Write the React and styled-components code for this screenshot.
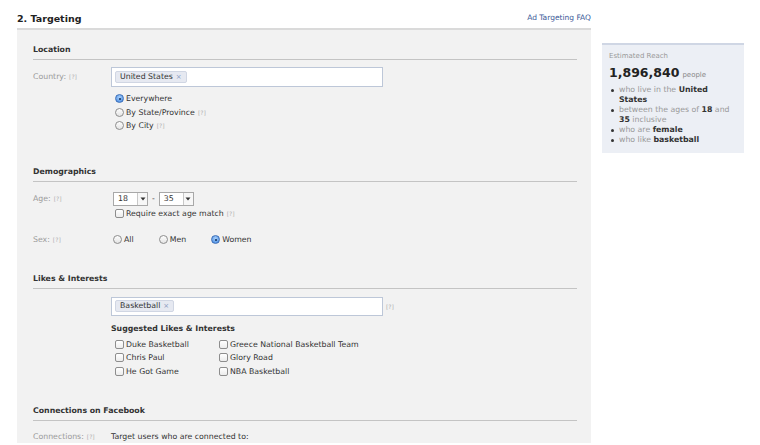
import React from "react";
import styled, { createGlobalStyle, css } from "styled-components";

const GlobalStyle = createGlobalStyle`
  html, body { margin: 0; padding: 0; background: #fff; }
  body { font-family: "DejaVu Sans", "Liberation Sans", sans-serif; font-size: 7.8px; color: #333; }
  * { box-sizing: border-box; }
`;

const Page = styled.div`
  display: flex;
  align-items: flex-start;
  width: 760px;
  height: 445px;
  padding-left: 17px;
  overflow: hidden;
`;

const Main = styled.div`
  width: 574px;
  height: 443px;
  display: flex;
  flex-direction: column;
`;

const Header = styled.div`
  height: 30px;
  flex: none;
  border-bottom: 2px solid #dadada;
  display: flex;
  justify-content: space-between;
  align-items: flex-end;
  padding-bottom: 3px;
`;

const Title = styled.h2`
  margin: 0;
  font-size: 9.5px;
  line-height: 12px;
  font-weight: bold;
  color: #222;
`;

const FaqLink = styled.a`
  font-size: 7.5px;
  line-height: 12px;
  color: #3b5998;
  text-decoration: none;
  margin-bottom: 1px;
`;

const Panel = styled.div`
  flex: 1;
  background: #f2f2f2;
  padding: 14px 14px 0 16px;
  overflow: hidden;
`;

const Section = styled.section`
  margin-top: ${(p) => p.$top || 0}px;
`;

const SectionTitle = styled.div`
  font-weight: bold;
  font-size: 7.8px;
  line-height: 12px;
  color: #333;
  padding-bottom: 3px;
  border-bottom: 1px solid #c4c4c4;
`;

const Row = styled.div`
  display: grid;
  grid-template-columns: 78px 1fr;
  align-items: ${(p) => p.$align || "center"};
  margin-top: ${(p) => p.$top || 0}px;
`;

const Label = styled.div`
  color: #9a9a9a;
  line-height: 12px;
`;

const Help = styled.span`
  color: #b0b0b0;
  font-size: 6px;
  margin-left: 3px;
`;

const Controls = styled.div`
  display: flex;
  flex-direction: column;
  align-items: flex-start;
`;

const InputLine = styled.div`
  display: flex;
  align-items: center;
`;

const TokenInput = styled.div`
  width: 272px;
  height: ${(p) => p.$h || 20}px;
  border: 1px solid #bdc7d8;
  background: #fff;
  display: flex;
  align-items: center;
  padding: 0 3px;
`;

const Token = styled.span`
  display: inline-flex;
  align-items: center;
  height: 12px;
  padding: 0 4px;
  background: #e6e9f1;
  border: 1px solid #d0d6e3;
  border-radius: 2px;
  color: #333;
  line-height: 10px;
`;

const TokenX = styled.span`
  color: #8a9bc0;
  margin-left: 3px;
  font-size: 7px;
`;

const OptionList = styled.div`
  display: flex;
  flex-direction: column;
  padding-left: 4px;
  margin-top: ${(p) => p.$top || 0}px;
`;

const OptionRow = styled.label`
  display: flex;
  align-items: center;
  height: 13.5px;
  gap: 2px;
  color: #333;
  white-space: nowrap;
`;

const Radio = styled.span`
  width: 9px;
  height: 9px;
  border-radius: 50%;
  border: 1px solid #8d8d8d;
  background: linear-gradient(#fdfdfd, #e4e4e4);
  flex: none;
  position: relative;
  ${(p) =>
    p.$checked &&
    css`
      border-color: #3d6fb8;
      background: radial-gradient(circle at 50% 35%, #a9d0fb, #3f86e0);
      &::after {
        content: "";
        position: absolute;
        left: 2.5px;
        top: 2.5px;
        width: 2px;
        height: 2px;
        border-radius: 50%;
        background: #0d2d5a;
      }
    `}
`;

const Check = styled.span`
  width: 9px;
  height: 9px;
  border-radius: 2px;
  border: 1px solid #8d8d8d;
  background: linear-gradient(#fff, #ececec);
  flex: none;
`;

const ChoiceLine = styled.div`
  display: flex;
  align-items: center;
  gap: 25px;
  padding-left: 2px;
`;

const AgeLine = styled.div`
  display: flex;
  align-items: center;
  gap: 4px;
  margin-left: 2px;
`;

const Select = styled.span`
  display: inline-flex;
  align-items: center;
  justify-content: space-between;
  width: 35px;
  height: 14px;
  border: 1px solid #a8a8a8;
  background: #fff;
  padding-left: 4px;
  color: #333;
`;

const SelectArrow = styled.span`
  width: 10px;
  height: 12px;
  display: flex;
  align-items: center;
  justify-content: center;
  border-left: 1px solid #c8c8c8;
  background: #f7f7f7;
`;

const SubTitle = styled.div`
  font-weight: bold;
  color: #333;
  line-height: 12px;
  margin-top: 7px;
`;

const CheckGrid = styled.div`
  display: grid;
  grid-template-columns: 104px auto;
  grid-auto-flow: column;
  grid-template-rows: repeat(3, 13.5px);
  padding-left: 4px;
  margin-top: 3px;
`;

const PlainText = styled.div`
  color: #333;
  line-height: 12px;
`;

const Reach = styled.aside`
  width: 142px;
  height: 110px;
  margin-top: 43px;
  margin-left: 11px;
  background: #eceff5;
  border-top: 2px solid #cfd6e4;
  padding: 6px 10px 6px 7px;
`;

const ReachLabel = styled.div`
  color: #999;
  font-size: 7px;
  line-height: 10px;
`;

const ReachCount = styled.div`
  display: flex;
  align-items: baseline;
  gap: 3px;
  margin-top: 3px;
`;

const Count = styled.span`
  font-size: 12.5px;
  font-weight: bold;
  color: #222;
  line-height: 18px;
`;

const People = styled.span`
  font-size: 7px;
  color: #888;
`;

const ReachList = styled.ul`
  list-style: none;
  margin: 3px 0 0;
  padding: 0;
`;

const ReachItem = styled.li`
  position: relative;
  padding-left: 10px;
  font-size: 7.8px;
  line-height: 10px;
  color: #999;
  &::before {
    content: "";
    position: absolute;
    left: 2px;
    top: 4px;
    width: 3px;
    height: 3px;
    border-radius: 50%;
    background: #333;
  }
  b { color: #333; }
`;

const Arrow = () => (
  <svg width="6" height="6" viewBox="0 0 6 6">
    <path d="M0.5 1.5 L5.5 1.5 L3 4.5 Z" fill="#333" />
  </svg>
);

const AgeSelect = ({ value }) => (
  <Select>
    {value}
    <SelectArrow>
      <Arrow />
    </SelectArrow>
  </Select>
);

const Opt = ({ type = "radio", checked, children }) => (
  <OptionRow>
    {type === "radio" ? <Radio $checked={checked} /> : <Check />}
    <span>{children}</span>
  </OptionRow>
);

export default function App() {
  return (
    <>
      <GlobalStyle />
      <Page>
        <Main>
          <Header>
            <Title>2. Targeting</Title>
            <FaqLink href="#">Ad Targeting FAQ</FaqLink>
          </Header>
          <Panel>
            <Section>
              <SectionTitle>Location</SectionTitle>
              <Row $top={7}>
                <Label>
                  Country:<Help>[?]</Help>
                </Label>
                <TokenInput>
                  <Token>
                    United States<TokenX>×</TokenX>
                  </Token>
                </TokenInput>
              </Row>
              <Row>
                <span />
                <OptionList $top={5}>
                  <Opt checked>Everywhere</Opt>
                  <Opt>
                    By State/Province<Help>[?]</Help>
                  </Opt>
                  <Opt>
                    By City<Help>[?]</Help>
                  </Opt>
                </OptionList>
              </Row>
            </Section>

            <Section $top={33}>
              <SectionTitle>Demographics</SectionTitle>
              <Row $top={10}>
                <Label>
                  Age:<Help>[?]</Help>
                </Label>
                <AgeLine>
                  <AgeSelect value="18" />
                  <span>-</span>
                  <AgeSelect value="35" />
                </AgeLine>
              </Row>
              <Row>
                <span />
                <OptionList $top={1}>
                  <Opt type="check">
                    Require exact age match<Help>[?]</Help>
                  </Opt>
                </OptionList>
              </Row>
              <Row $top={13}>
                <Label>
                  Sex:<Help>[?]</Help>
                </Label>
                <ChoiceLine>
                  <Opt>All</Opt>
                  <Opt>Men</Opt>
                  <Opt checked>Women</Opt>
                </ChoiceLine>
              </Row>
            </Section>

            <Section $top={26}>
              <SectionTitle>Likes &amp; Interests</SectionTitle>
              <Row $top={8} $align="start">
                <span />
                <Controls>
                  <InputLine>
                    <TokenInput $h={19}>
                      <Token>
                        Basketball<TokenX>×</TokenX>
                      </Token>
                    </TokenInput>
                    <Help>[?]</Help>
                  </InputLine>
                  <SubTitle>Suggested Likes &amp; Interests</SubTitle>
                  <CheckGrid>
                    <Opt type="check">Duke Basketball</Opt>
                    <Opt type="check">Chris Paul</Opt>
                    <Opt type="check">He Got Game</Opt>
                    <Opt type="check">Greece National Basketball Team</Opt>
                    <Opt type="check">Glory Road</Opt>
                    <Opt type="check">NBA Basketball</Opt>
                  </CheckGrid>
                </Controls>
              </Row>
            </Section>

            <Section $top={27}>
              <SectionTitle>Connections on Facebook</SectionTitle>
              <Row $top={10}>
                <Label>
                  Connections:<Help>[?]</Help>
                </Label>
                <PlainText>Target users who are connected to:</PlainText>
              </Row>
            </Section>
          </Panel>
        </Main>

        <Reach>
          <ReachLabel>Estimated Reach</ReachLabel>
          <ReachCount>
            <Count>1,896,840</Count>
            <People>people</People>
          </ReachCount>
          <ReachList>
            <ReachItem>
              who live in the <b>United</b> <b>States</b>
            </ReachItem>
            <ReachItem>
              between the ages of <b>18</b> and <b>35</b> inclusive
            </ReachItem>
            <ReachItem>
              who are <b>female</b>
            </ReachItem>
            <ReachItem>
              who like <b>basketball</b>
            </ReachItem>
          </ReachList>
        </Reach>
      </Page>
    </>
  );
}
